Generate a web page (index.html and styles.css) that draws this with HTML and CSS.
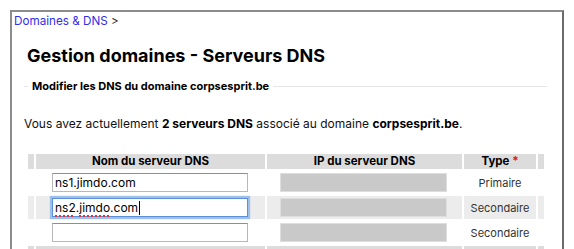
FILE: index.html
```html
<!DOCTYPE html>
<html lang="fr">
<head>
  <meta charset="UTF-8">
  <meta name="viewport" content="width=device-width, initial-scale=1.0">
  <title>Gestion domaines - Serveurs DNS</title>
  <link rel="stylesheet" href="styles.css">
</head>
<body>
  <div class="panel">
    <!-- fil d'ariane -->
    <div class="crumbs"><a href="#">Domaines &amp; DNS</a> &gt;</div>

    <h1>Gestion domaines - Serveurs DNS</h1>

    <fieldset class="dns-box">
      <legend>Modifier les DNS du domaine corpsesprit.be</legend>

      <p class="intro">Vous avez actuellement <strong>2 serveurs DNS</strong> associé au domaine <strong>corpsesprit.be</strong>.</p>

      <!-- liste des serveurs -->
      <table class="dns-table">
        <colgroup>
          <col class="col-edge">
          <col class="col-name">
          <col class="col-ip">
          <col class="col-type">
          <col class="col-edge">
        </colgroup>
        <thead>
          <tr>
            <th></th>
            <th>Nom du serveur DNS</th>
            <th>IP du serveur DNS</th>
            <th>Type <span class="req">*</span></th>
            <th></th>
          </tr>
        </thead>
        <tbody>
          <tr>
            <td></td>
            <td><input type="text" class="field" value="ns1.jimdo.com"></td>
            <td><span class="ip-field"></span></td>
            <td class="type">Primaire</td>
            <td></td>
          </tr>
          <tr class="alt">
            <td></td>
            <td><div class="field focused"><span class="typo">ns2</span>.<span class="typo">jimdo</span>.com<span class="caret"></span></div></td>
            <td><span class="ip-field"></span></td>
            <td class="type">Secondaire</td>
            <td></td>
          </tr>
          <tr>
            <td></td>
            <td><input type="text" class="field" value=""></td>
            <td><span class="ip-field"></span></td>
            <td class="type">Secondaire</td>
            <td></td>
          </tr>
        </tbody>
        <tfoot>
          <tr>
            <td></td><td></td><td></td><td></td><td></td>
          </tr>
        </tfoot>
      </table>
    </fieldset>
  </div>
</body>
</html>
```
FILE: styles.css
```css
* {
  box-sizing: border-box;
}
body {
  margin: 0;
  background: #fff;
  font-family: Inter, "Noto Sans", sans-serif;
  color: #111;
  overflow: hidden;
}
.panel {
  margin: 10px 0 0 10px;
  width: 554px;
  min-height: 320px;
  border: 2px solid #8c8c8c;
  border-right-color: #6b6b6b;
  border-bottom: none;
}
.crumbs {
  padding: 2px 2px 0;
  font-size: 11.7px;
  line-height: 14px;
  color: #333;
}
.crumbs a {
  color: #2f2fe8;
  text-decoration: none;
}
h1 {
  margin: 17px 0 0 15px;
  font-size: 18px;
  line-height: 22px;
  font-weight: 700;
  color: #000;
}
/* bloc avec titre sur la ligne */
.dns-box {
  margin: 12px 15px 0 12px;
  padding: 0;
  border: none;
  border-top: 1px solid #e6e6e6;
  min-width: 0;
}
.dns-box legend {
  margin-left: 4px;
  padding: 0 4px;
  font-size: 11px;
  line-height: 14px;
  font-weight: 700;
  color: #000;
}
.intro {
  margin: 23px 0 0;
  font-size: 12px;
  line-height: 16px;
  color: #111;
}
.intro strong {
  color: #000;
}
.dns-table {
  margin: 20px 0 0 2px;
  width: 520px;
  table-layout: fixed;
  border-collapse: separate;
  border-spacing: 2px;
}
.col-edge { width: 6px; }
.col-name { width: 229px; }
.col-ip { width: 195px; }
.col-type { width: 72px; }
.dns-table th {
  height: 15px;
  padding: 0;
  background: #dcdcdc;
  font-size: 11.5px;
  line-height: 15px;
  font-weight: 700;
  color: #000;
  text-align: center;
}
.dns-table th .req {
  color: #e8141b;
}
.dns-table td {
  height: 23px;
  padding: 0;
  vertical-align: middle;
  text-align: center;
}
.dns-table tr.alt td {
  background: #ececec;
}
.dns-table tfoot td {
  background: #dcdcdc;
}
.dns-table td.type {
  font-size: 11px;
  color: #333;
}
.field {
  display: block;
  width: 196px;
  height: 19px;
  margin: 0 0 0 16px;
  padding: 0 2px;
  border: 1px solid #b8b8b8;
  border-top-color: #8f8f8f;
  background: #fff;
  font-family: Inter, "Noto Sans", sans-serif;
  font-size: 12px;
  line-height: 17px;
  color: #000;
  text-align: left;
  outline: none;
}
.field.focused {
  border-color: #5b8fd6;
  box-shadow: 0 0 1px 2px #9dbfea;
}
.typo {
  text-decoration: underline dotted #e0323a;
  text-decoration-thickness: 2px;
  text-underline-offset: 3px;
}
.caret {
  display: inline-block;
  width: 1px;
  height: 14px;
  margin-left: 1px;
  background: #000;
  vertical-align: -3px;
}
.ip-field {
  display: block;
  width: 167px;
  height: 19px;
  margin-left: 13px;
  background: #c9c9c9;
  border: 1px solid #dedede;
}
```
